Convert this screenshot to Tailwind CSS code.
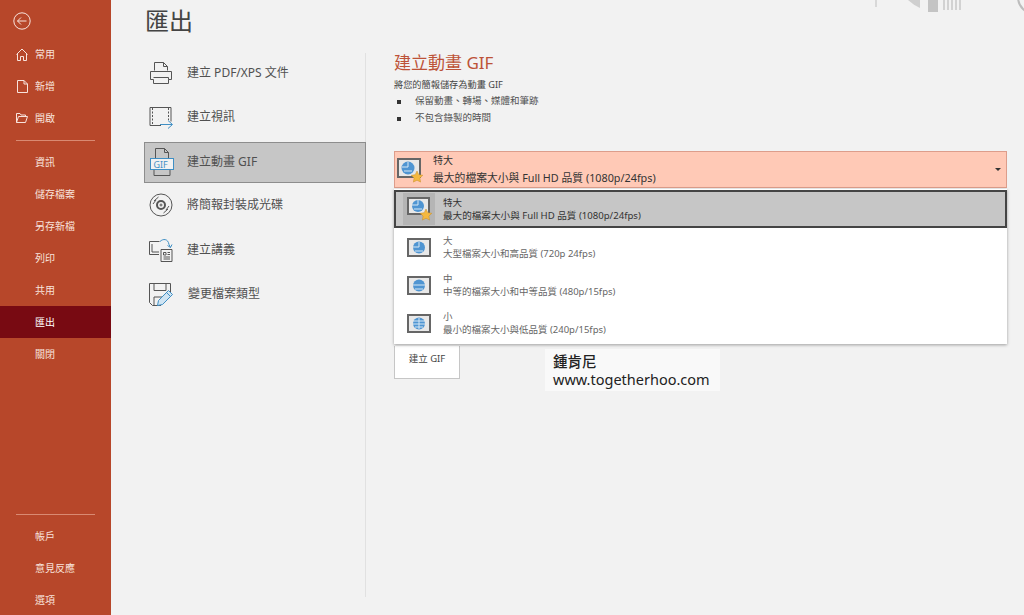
<!DOCTYPE html>
<html lang="zh-Hant">
<head>
    <meta charset="UTF-8">
    <meta name="viewport" content="width=device-width, initial-scale=1.0">
    <title>匯出</title>
    <script src="https://cdn.jsdelivr.net/npm/@tailwindcss/browser@4"></script>
</head>
<body class="bg-[#f2f2f2] font-['Noto_Sans','Noto_Sans_CJK_TC',sans-serif] overflow-hidden">
<div class="flex w-[1024px] h-[615px] overflow-hidden">

    <!-- backstage nav -->
    <nav class="w-[111px] h-full shrink-0 bg-[#b7472a] text-[#f8e3dc] text-[10px] flex flex-col">
        <div class="h-[38px] pl-[13px] pt-[12px]">
            <svg class="w-[18px] h-[18px]" viewBox="0 0 18 18" fill="none" stroke="#f8e3dc" stroke-width="1"><circle cx="9" cy="9" r="8.2"/><path d="M13.5 9H4.5M8 5.5 4.5 9 8 12.5"/></svg>
        </div>
        <div class="h-[32px] flex items-center pl-[16px] gap-[7px]">
            <svg class="w-[12px] h-[13px]" viewBox="0 0 12 13" fill="none" stroke="#f8e3dc"><path d="M.5 6.5 6 1l5.5 5.5M1.5 5.5v7h3V8.5h3v4h3v-7"/></svg>
            <span>常用</span>
        </div>
        <div class="h-[32px] flex items-center pl-[17px] gap-[7px]">
            <svg class="w-[11px] h-[13px]" viewBox="0 0 11 13" fill="none" stroke="#f8e3dc"><path d="M.5.5h6.5l3.5 3.5v8.5H.5zM7 .5V4h3.5"/></svg>
            <span>新增</span>
        </div>
        <div class="h-[32px] flex items-center pl-[16px] gap-[7px]">
            <svg class="w-[12px] h-[10px]" viewBox="0 0 12 10" fill="none" stroke="#f8e3dc"><path d="M.5 9.500V.5h3.500l1 1.500h4.500v1.500M.5 9.500l2-6h9l-2 6z"/></svg>
            <span>開啟</span>
        </div>
        <div class="mx-[16px] mt-[6px] mb-[5px] h-px bg-[#d98a72]"></div>
        <div>
            <div class="h-[32px] flex items-center pl-[35px]">資訊</div>
            <div class="h-[32px] flex items-center pl-[35px]">儲存檔案</div>
            <div class="h-[32px] flex items-center pl-[35px]">另存新檔</div>
            <div class="h-[32px] flex items-center pl-[35px]">列印</div>
            <div class="h-[32px] flex items-center pl-[35px]">共用</div>
            <div class="h-[32px] flex items-center pl-[35px] bg-[#780a12] text-white">匯出</div>
            <div class="h-[32px] flex items-center pl-[35px]">關閉</div>
        </div>
        <div class="mt-auto">
            <div class="mx-[16px] h-px bg-[#d98a72] mb-[5px]"></div>
            <div class="h-[32px] flex items-center pl-[35px]">帳戶</div>
            <div class="h-[32px] flex items-center pl-[35px]">意見反應</div>
            <div class="h-[32px] flex items-center pl-[35px] mb-[-1px]">選項</div>
        </div>
    </nav>

    <!-- main -->
    <div class="flex-1 relative">
        <h1 class="text-[24px] leading-[32px] text-[#444] pl-[34px] pt-[5px] h-[53px]">匯出</h1>

        <div class="flex h-[544px]">
            <!-- export types -->
            <ul class="w-[255px] h-full border-r border-[#e1e1e1] pl-[33px] text-[12px] text-[#505050]">
                <li class="h-[40px] mb-[2px] w-[221px] flex items-center pl-[5px] gap-[14px]">
                    <svg class="w-[24px] h-[24px]" viewBox="0 0 24 24" fill="none" stroke="#555"><path d="M5.500 9.500v-8h9l4 4v4M14.500 1.500v4h4M1.500 10.500h21v8h-3v4h-15v-4h-3zM4.500 16.500h15v2"/></svg>
                    <span>建立 PDF/XPS 文件</span>
                </li>
                <li class="h-[44px] w-[221px] flex items-center pl-[5px] gap-[14px]">
                    <svg class="w-[24px] h-[24px]" viewBox="0 0 24 24" fill="none" stroke="#555"><path d="M1 2.500h21v14M1 2.500v18h11"/><path d="M3.500 3v17M19.500 3v12" stroke-dasharray="2 1.500"/><path d="M11 19.500h12M19 15.500l4.500 4-4.500 4" stroke="#3f8fc4"/></svg>
                    <span>建立視訊</span>
                </li>
                <li class="h-[41px] w-[222px] mt-[3px] pb-[2px] flex items-center pl-[5px] gap-[13px] bg-[#c6c6c6] border border-[#8d8d8d]">
                    <svg class="w-[24px] h-[30px]" viewBox="0 0 24 30" fill="none" stroke="#555"><path d="M5.500 11V1.500h9l4 4V11M14.500 1.500v4h4M4 23v5.500h16V23"/><rect x=".5" y="11.500" width="23" height="11" fill="#f2f2f2" stroke="#3f8fc4"/><text x="3.500" y="20.500" font-size="9" fill="#3f8fc4" stroke="none" font-family="Noto Sans">GIF</text></svg>
                    <span>建立動畫 GIF</span>
                </li>
                <li class="h-[44px] w-[221px] flex items-center pl-[5px] gap-[14px]">
                    <svg class="w-[24px] h-[24px]" viewBox="0 0 24 24" fill="none" stroke="#555"><circle cx="12" cy="12" r="11"/><circle cx="12" cy="12" r="4" stroke-width="2"/><circle cx="12" cy="12" r="1"/><path d="M5 8l4.500-4M19 16l-4.500 4M4 11l3-4M20 13l-3 4"/></svg>
                    <span>將簡報封裝成光碟</span>
                </li>
                <li class="h-[45px] w-[221px] flex items-center pl-[5px] gap-[14px]">
                    <svg class="w-[24px] h-[24px]" viewBox="0 0 24 24" fill="none" stroke="#555"><path d="M10 16.500H.5V3.500h10M3 6v8h7"/><path d="M11 3.500c3-3 8-3 9 3l1.500 3M23 6.500l-1.500 3-3-2" stroke="#3f8fc4"/><path d="M12 11.500h11v12H12zM14.500 14.500h2.500v2.500h-2.500zM18.500 14.500h2.500M18.500 16.500h2.500M14.500 19h6.500M14.500 21h6.500"/></svg>
                    <span>建立講義</span>
                </li>
                <li class="h-[44px] w-[221px] flex items-center pl-[5px] gap-[14px]">
                    <svg class="w-[25px] h-[25px]" viewBox="0 0 25 25" fill="none" stroke="#555"><path d="M12 23.500H3.500l-3-3V1.500h21v9M5 1.500V8.500h12V1.500M5 23V15h9"/><path d="M8.500 23.500l1-5L19.500 8.500l4 4-10 10z" fill="#cfe4f3" stroke="#3f8fc4"/><path d="M17.500 10.500l4 4" stroke="#3f8fc4"/></svg>
                    <span>變更檔案類型</span>
                </li>
            </ul>

            <!-- gif options -->
            <section class="pl-[28px] w-[641px]">
                <h2 class="text-[17px] leading-[20px] text-[#bd5238]">建立動畫 GIF</h2>
                <p class="text-[9.200px] leading-[14px] text-[#444] mt-[5px]">將您的簡報儲存為動畫 GIF</p>
                <ul class="text-[9.500px] text-[#505050] mt-px">
                    <li class="h-[17px] flex items-center"><span class="w-[4px] h-[4px] bg-[#333] ml-[3px] mr-[14px]"></span>保留動畫、轉場、媒體和筆跡</li>
                    <li class="h-[17px] flex items-center"><span class="w-[4px] h-[4px] bg-[#333] ml-[3px] mr-[14px]"></span>不包含錄製的時間</li>
                </ul>

                <div class="mt-[24px] w-[613px] h-[37px] bg-[#ffc9b6] border border-[#dd9d8b] flex items-center text-[#333] relative">
                    <svg class="w-[26px] h-[26px] ml-[2px] mt-[2px]" viewBox="0 0 26 26"><rect x="1" y="1" width="22" height="18" fill="#e8e8e8" stroke="#666" stroke-width="2"/><circle cx="11" cy="10" r="6.500" fill="#4f95d2"/><path d="M5 9h6V4M7 13h8" stroke="#d7e8f5" fill="none"/><path d="M20 13l1.800 3.700 4 .6-2.900 2.800.7 4-3.600-1.900-3.600 1.900.7-4-2.900-2.800 4-.6z" fill="#f4b83f" stroke="#c98f24" stroke-width=".5"/></svg>
                    <div class="ml-[10px] text-[10px] leading-[18px] pb-[1px]">
                        <div>特大</div>
                        <div class="text-[10.800px]">最大的檔案大小與 Full HD 品質 (1080p/24fps)</div>
                    </div>
                    <span class="absolute right-[5px] top-[16px] border-x-[3px] border-t-[3px] border-x-transparent border-t-[#333]"></span>
                </div>

                <div class="w-[613px] bg-white shadow-[0_1px_3px_rgba(0,0,0,0.35)] mt-px pt-px pb-[2px] relative z-10 text-[#666] text-[9.500px] leading-[13px]">
                    <div class="h-[38px] bg-[#c6c6c6] border-2 border-[#444] flex items-center text-[#333]">
                        <span class="w-[32px] h-[32px] ml-[7px] bg-[#b5b5b5] flex items-center justify-center">
                            <svg class="w-[26px] h-[26px]" viewBox="0 0 26 26"><rect x="2" y="2" width="21" height="16" fill="#e8e8e8" stroke="#666" stroke-width="2"/><circle cx="12" cy="10" r="6" fill="#4f95d2"/><path d="M6 9h6V4M8 13h8" stroke="#d7e8f5" fill="none"/><path d="M20 13l1.800 3.700 4 .6-2.900 2.800.7 4-3.600-1.900-3.600 1.900.7-4-2.900-2.800 4-.6z" fill="#f4b83f" stroke="#c98f24" stroke-width=".5"/></svg>
                        </span>
                        <div class="ml-[8px]"><div>特大</div><div class="text-[9.600px]">最大的檔案大小與 Full HD 品質 (1080p/24fps)</div></div>
                    </div>
                    <div class="h-[38px] flex items-center">
                        <svg class="w-[24px] h-[19px] ml-[13px]" viewBox="0 0 24 19"><rect x="1" y="1" width="22" height="17" fill="#e8e8e8" stroke="#666" stroke-width="2"/><circle cx="12" cy="9.500" r="6" fill="#4f95d2"/><path d="M6 9h6V4M8 13h8" stroke="#d7e8f5" fill="none"/></svg>
                        <div class="ml-[12px]"><div>大</div><div>大型檔案大小和高品質 (720p 24fps)</div></div>
                    </div>
                    <div class="h-[38px] flex items-center">
                        <svg class="w-[24px] h-[19px] ml-[13px]" viewBox="0 0 24 19"><rect x="1" y="1" width="22" height="17" fill="#e8e8e8" stroke="#666" stroke-width="2"/><circle cx="12" cy="9.500" r="6" fill="#4f95d2"/><path d="M6 9h12M8 13h8" stroke="#d7e8f5" fill="none"/></svg>
                        <div class="ml-[12px]"><div>中</div><div>中等的檔案大小和中等品質 (480p/15fps)</div></div>
                    </div>
                    <div class="h-[38px] flex items-center">
                        <svg class="w-[24px] h-[19px] ml-[13px]" viewBox="0 0 24 19"><rect x="1" y="1" width="22" height="17" fill="#e8e8e8" stroke="#666" stroke-width="2"/><circle cx="12" cy="9.500" r="6" fill="#4f95d2"/><path d="M6 7h12M6 10h12M8 13h8M12 4v11" stroke="#d7e8f5" fill="none"/></svg>
                        <div class="ml-[12px]"><div>小</div><div>最小的檔案大小與低品質 (240p/15fps)</div></div>
                    </div>
                </div>

                <div class="relative">
                    <button class="w-[66px] h-[33px] bg-white border border-[#c6c6c6] border-t-0 text-[9.500px] text-[#444] pb-[5px]">建立 GIF</button>
                    <div class="absolute left-[151px] top-[5px] w-[175px] h-[42px] bg-[#f9f9f9] text-[14.500px] leading-[18px] text-[#222] pl-[8px] pt-[3px]">
                        <div class="font-medium">鍾肯尼</div>
                        <div>www.togetherhoo.com</div>
                    </div>
                </div>
            </section>
        </div>

        <!-- faint title bar decoration, top right -->
        <div class="absolute top-0 right-[62px] flex items-start">
            <span class="w-[12px] h-[8px] bg-[#cfcfcf] [clip-path:polygon(0_0,100%_0,100%_100%,50%_60%)]"></span>
            <span class="w-[10px] h-[12px] ml-[8px] bg-[#c4c4c4]"></span>
            <span class="w-[19px] h-[10px] ml-[5px] bg-[repeating-linear-gradient(90deg,#d2d2d2_0_2px,#f2f2f2_2px_4px)]"></span>
        </div>
        <span class="absolute top-0 left-[764px] w-[2px] h-[7px] bg-[#d8d8d8]"></span>
        <span class="absolute top-[-21px] left-[906px] w-[36px] h-[36px] rounded-full border-2 border-[#bdbdbd]"></span>
    </div>
</div>
</body>
</html>
